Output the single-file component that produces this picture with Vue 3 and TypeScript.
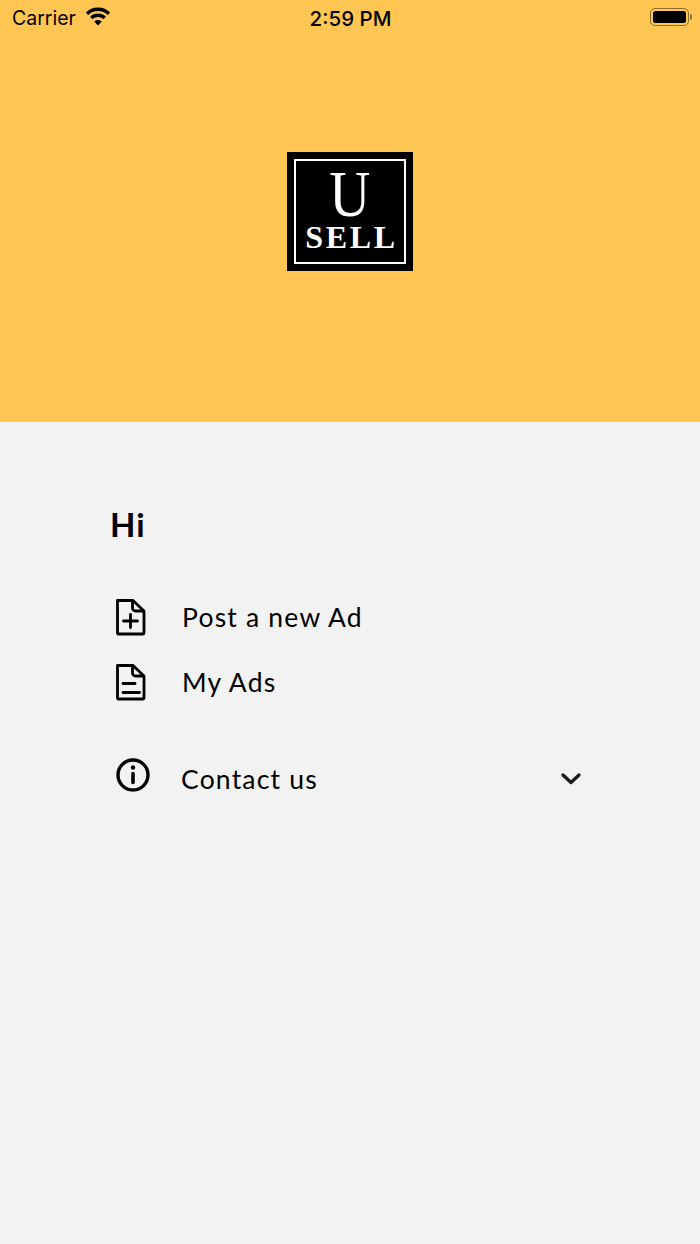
<script setup lang="ts">
interface MenuItem {
  label: string
  icon: 'plus' | 'lines'
}

const items: MenuItem[] = [
  { label: 'Post a new Ad', icon: 'plus' },
  { label: 'My Ads', icon: 'lines' }
]
</script>

<template>
  <div class="page">
    <header class="hero">
      <div class="status">
        <div class="status-left">
          <span class="carrier">Carrier</span>
          <svg class="wifi" width="26" height="19" viewBox="0 0 26 19">
            <path d="M13 0.5C8.2 0.5 3.9 2.4 0.8 5.5L3.2 8C5.7 5.5 9.2 4 13 4s7.3 1.5 9.8 4l2.4-2.5C22.1 2.4 17.8 0.5 13 0.5z" fill="#000" />
            <path d="M13 6.6c-3.1 0-5.9 1.2-7.9 3.2l2.5 2.5c1.4-1.4 3.3-2.2 5.4-2.2s4 .8 5.4 2.2l2.5-2.5c-2-2-4.8-3.2-7.9-3.2z" fill="#000" />
            <path d="M13 12.9c-1.5 0-2.8.6-3.8 1.5L13 18.4l3.8-4c-1-.9-2.3-1.5-3.8-1.5z" fill="#000" />
          </svg>
        </div>
        <span class="clock">2:59 PM</span>
        <div class="battery">
          <div class="battery-shell"><div class="battery-fill"></div></div>
          <div class="battery-cap"></div>
        </div>
      </div>
      <div class="logo">
        <div class="logo-inner">
          <span class="logo-u">U</span>
          <span class="logo-sell">SELL</span>
        </div>
      </div>
    </header>

    <main class="menu">
      <h1 class="greeting">Hi</h1>

      <ul class="links">
        <li v-for="item in items" :key="item.label" class="link">
          <svg class="doc" width="32" height="38" viewBox="0 0 32 38" fill="none" stroke="#000" stroke-width="2.8" stroke-linejoin="round" stroke-linecap="round">
            <path d="M2.5 2.5H18L29 13V35a1 1 0 0 1-1 1H3.5a1 1 0 0 1-1-1z" />
            <path d="M17.5 3V10a3 3 0 0 0 3 3H28.5" />
            <template v-if="item.icon === 'plus'">
              <path d="M8.5 23H22.5" />
              <path d="M15.5 16.5V29.5" />
            </template>
            <template v-else>
              <path d="M8 20.5H20" />
              <path d="M8 29.5H24.5" />
            </template>
          </svg>
          <span class="link-label">{{ item.label }}</span>
        </li>
      </ul>

      <div class="contact">
        <svg class="info" width="36" height="36" viewBox="0 0 36 36" fill="none" stroke="#000">
          <circle cx="18" cy="18" r="15" stroke-width="3.4" />
          <path d="M18 16.5V25.5" stroke-width="3.6" stroke-linecap="round" />
          <circle cx="18" cy="10.5" r="2.2" fill="#000" stroke="none" />
        </svg>
        <span class="contact-label">Contact us</span>
        <svg class="chevron" width="22" height="14" viewBox="0 0 22 14" fill="none" stroke="#1c1c1c" stroke-width="3.4" stroke-linecap="round" stroke-linejoin="round">
          <path d="M3 3L11 10.5L19 3" />
        </svg>
      </div>
    </main>
  </div>
</template>

<style scoped>
.page {
  width: 700px;
  height: 1244px;
  background: #f2f2f2;
  display: flex;
  flex-direction: column;
  font-family: "Lato", "Noto Sans", sans-serif;
  color: #000;
  overflow: hidden;
}

.hero {
  height: 422px;
  background: #ffc653;
  display: flex;
  flex-direction: column;
  align-items: center;
}

.status {
  width: 100%;
  height: 36px;
  box-sizing: border-box;
  padding: 0 8px 0 12px;
  display: grid;
  grid-template-columns: 1fr auto 1fr;
  align-items: center;
  font-family: "Inter", "Liberation Sans", sans-serif;
}

.status-left {
  display: flex;
  align-items: center;
  gap: 9px;
}

.carrier {
  font-size: 19.5px;
  font-weight: 400;
}

.wifi {
  margin-top: -3px;
}

.clock {
  font-size: 20.5px;
  font-weight: 500;
  margin-left: -3px;
}

.battery {
  justify-self: end;
  display: flex;
  align-items: center;
  gap: 1px;
  margin-top: -2px;
}

.battery-shell {
  width: 39px;
  height: 18px;
  box-sizing: border-box;
  border: 1.5px solid #8f6f2d;
  border-radius: 5px;
  padding: 2px;
}

.battery-fill {
  width: 100%;
  height: 100%;
  background: #000;
  border-radius: 2.5px;
}

.battery-cap {
  width: 2px;
  height: 6px;
  background: #8f6f2d;
  border-radius: 0 2px 2px 0;
}

.logo {
  margin-top: 116px;
  width: 126px;
  height: 119px;
  box-sizing: border-box;
  padding: 7px;
  background: #000;
}

.logo-inner {
  width: 100%;
  height: 100%;
  box-sizing: border-box;
  border: 2px solid #fff;
  color: #fff;
  display: flex;
  flex-direction: column;
  align-items: center;
  font-family: "Liberation Serif", "Times New Roman", serif;
}

.logo-u {
  font-size: 66px;
  line-height: 46px;
  height: 46px;
  margin-top: 10px;
  transform: scaleX(0.86);
}

.logo-sell {
  font-size: 32px;
  line-height: 24px;
  font-weight: 700;
  letter-spacing: 2.7px;
  margin-right: -3px;
  margin-top: 8px;
}

.menu {
  flex: 1;
  padding: 82px 118px 0 110px;
  display: flex;
  flex-direction: column;
}

.greeting {
  margin: 0;
  font-size: 33px;
  line-height: 40px;
  font-weight: 700;
  letter-spacing: 1px;
}

.links {
  list-style: none;
  margin: 54px 0 0;
  padding: 0;
  display: flex;
  flex-direction: column;
  gap: 27px;
}

.link {
  display: flex;
  align-items: center;
  height: 38px;
  padding-left: 5px;
}

.doc {
  flex: none;
}

.link-label {
  margin-left: 35px;
  font-size: 26.5px;
  letter-spacing: 1.2px;
}

.contact {
  margin-top: 62px;
  display: flex;
  align-items: center;
  padding-left: 5px;
}

.info {
  flex: none;
  margin-top: -9px;
}

.contact-label {
  margin-left: 30px;
  font-size: 26.5px;
  letter-spacing: 1.2px;
}

.chevron {
  margin-left: auto;
}
</style>

<style>
html,
body {
  margin: 0;
  background: #f2f2f2;
}
</style>
